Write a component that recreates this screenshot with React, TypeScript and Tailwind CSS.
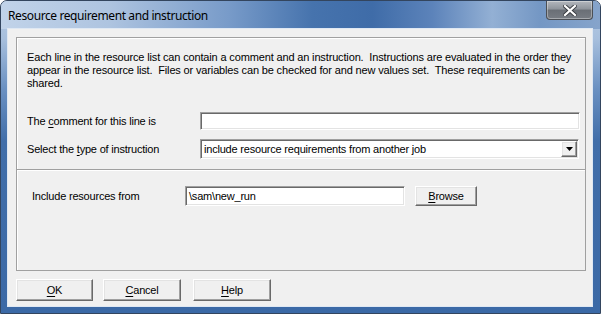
import React from "react";

const uiFont = { fontFamily: '"Liberation Sans", Arial, sans-serif' };

function Mnemonic({ text, at }: { text: string; at: number }) {
	return (
		<>
			{text.slice(0, at)}
			<span className="underline underline-offset-[2px]">{text[at]}</span>
			{text.slice(at + 1)}
		</>
	);
}

function SunkenBox({
	className,
	children,
}: {
	className?: string;
	children?: React.ReactNode;
}) {
	return (
		<div
			className={`bg-white border border-t-[#a0a0a0] border-l-[#a0a0a0] border-b-white border-r-white shadow-[inset_1px_1px_0_#696969,inset_-1px_-1px_0_#e3e3e3] ${className ?? ""}`}
		>
			{children}
		</div>
	);
}

function RaisedButton({
	className,
	children,
}: {
	className?: string;
	children?: React.ReactNode;
}) {
	return (
		<button
			type="button"
			className={`flex items-center justify-center bg-[#f0f0f0] border border-t-white border-l-white border-b-[#696969] border-r-[#696969] shadow-[inset_-1px_-1px_0_#a0a0a0,inset_1px_1px_0_#e3e3e3] text-[11px] tracking-[-0.2px] text-black leading-none ${className ?? ""}`}
		>
			{children}
		</button>
	);
}

function CloseButton() {
	return (
		<div className="mr-[7px] w-[47px] h-[19px] rounded-b-[4px] border border-t-0 border-[#4b4f55] bg-[linear-gradient(180deg,#b3b7bd_0%,#8f949b_45%,#6a6f76_50%,#777c83_100%)] shadow-[inset_0_0_0_1px_rgba(255,255,255,0.35)] flex items-center justify-center">
			<svg width="14" height="11" viewBox="0 0 14 11">
				<path
					d="M2 1 L12 10 M12 1 L2 10"
					stroke="#3a3d42"
					strokeWidth="4"
					strokeLinecap="square"
				/>
				<path
					d="M2 1 L12 10 M12 1 L2 10"
					stroke="#ffffff"
					strokeWidth="2.2"
					strokeLinecap="square"
				/>
			</svg>
		</div>
	);
}

export default function App() {
	return (
		<div
			className="w-[601px] h-[314px] flex flex-col rounded-t-[7px] border border-[#33455e] bg-[linear-gradient(180deg,#b9cce4_0%,#a7bfdd_12%,#6b91c2_28%,#416ea9_45%,#3b69a6_100%)] overflow-hidden"
			style={uiFont}
		>
			<div className="h-[28px] flex items-start justify-between bg-[linear-gradient(90deg,#c1d3e9_0%,#aec4e0_18%,#789bc9_38%,#4673ad_52%,#3f6ca8_62%,#5c83ba_72%,#93b0d4_82%,#7497c4_90%,#86a4cb_100%)]">
				<div
					className="pl-[7px] pt-[7px] text-[12px] leading-[16px] tracking-[-0.4px] text-black"
					style={{ fontFamily: '"Noto Sans", "Open Sans", sans-serif' }}
				>
					Resource requirement and instruction
				</div>
				<CloseButton />
			</div>
			<div className="flex-1 flex pl-[7px] pr-[8px] pb-[7px]">
				<div className="flex-1 bg-[#f0f0f0] shadow-[0_0_0_1px_#dfe8f3] pt-[8px] pl-[8px] flex flex-col">
					<div className="w-[570px] h-[234px] border border-[#a0a0a0] shadow-[inset_1px_1px_0_#ffffff] flex flex-col text-[11px] tracking-[-0.2px] text-black">
						<p className="pl-[10px] pt-[13px] pr-[6px] leading-[13px] tracking-[-0.15px]">
							Each line in the resource list can contain a comment and an
							instruction.&nbsp; Instructions are evaluated in the order they
							<br />
							appear in the resource list.&nbsp; Files or variables can be
							checked for and new values set.&nbsp; These requirements can be
							<br />
							shared.
						</p>
						<div className="mt-[22px] pl-[10px] flex items-center">
							<div className="w-[173px]">
								<Mnemonic text="The comment for this line is" at={4} />
							</div>
							<SunkenBox className="w-[380px] h-[18px]" />
						</div>
						<div className="mt-[9px] pl-[10px] flex items-center">
							<div className="w-[173px]">
								<Mnemonic text="Select the type of instruction" at={11} />
							</div>
							<SunkenBox className="w-[379px] h-[20px] flex items-center justify-between pl-[3px] pr-[1px]">
								<span className="text-[11px]">
									include resource requirements from another job
								</span>
								<RaisedButton className="w-[16px] h-[16px]">
									<svg width="7" height="4" viewBox="0 0 7 4">
										<path d="M0 0 H7 L3.5 4 Z" fill="#000" />
									</svg>
								</RaisedButton>
							</SunkenBox>
						</div>
						<div className="mt-[10px] h-px bg-[#a0a0a0] shadow-[0_1px_0_#ffffff]" />
						<div className="mt-[16px] pl-[15px] flex items-center">
							<div className="w-[153px]">Include resources from</div>
							<SunkenBox className="w-[220px] h-[20px] flex items-center pl-[3px]">
								<span>\sam\new_run</span>
							</SunkenBox>
							<RaisedButton className="ml-[10px] w-[62px] h-[20px]">
								<Mnemonic text="Browse" at={0} />
							</RaisedButton>
						</div>
					</div>
					<div className="mt-[8px] flex">
						<RaisedButton className="w-[77px] h-[22px]">
							<Mnemonic text="OK" at={0} />
						</RaisedButton>
						<RaisedButton className="ml-[10px] w-[78px] h-[22px]">
							<Mnemonic text="Cancel" at={0} />
						</RaisedButton>
						<RaisedButton className="ml-[12px] w-[78px] h-[22px]">
							<Mnemonic text="Help" at={0} />
						</RaisedButton>
					</div>
				</div>
			</div>
		</div>
	);
}
